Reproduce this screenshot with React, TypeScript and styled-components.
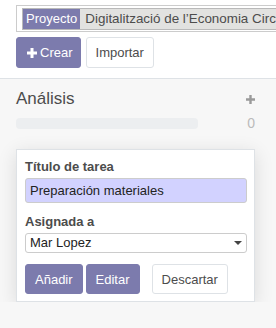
import styled, { createGlobalStyle } from "styled-components";

const Global = createGlobalStyle`
  html, body { margin: 0; padding: 0; overflow: hidden; }
  body {
    font-family: "Liberation Sans", Arial, sans-serif;
    font-size: 13px;
    color: #4c4c4c;
    background: #f7f7f7;
  }
`;

const ControlPanel = styled.div`
  background: #fff;
  border-bottom: 1px solid #dee2e6;
  padding: 5px 0 10px 16px;
  display: flex;
  flex-direction: column;
  gap: 5px;
  overflow: hidden;
`;

const SearchBox = styled.div`
  width: 420px;
  height: 27px;
  box-sizing: border-box;
  border: 1px solid #ccc;
  display: flex;
  align-items: center;
  padding: 0 5px;
`;

const Facet = styled.div`
  display: flex;
  height: 22px;
  box-sizing: border-box;
  border: 1px solid #b9b9b9;
  font-size: 13px;
  line-height: 20px;
  white-space: nowrap;
`;

const FacetLabel = styled.span`
  background: #7c7bad;
  color: #fff;
  padding: 0 3px;
`;

const FacetValue = styled.span`
  background: #e2e2e0;
  color: #4c4c4c;
  padding: 0 5px;
  font-size: 13.4px;
`;

const Buttons = styled.div`
  display: flex;
  gap: 5px;
`;

const Btn = styled.button<{ $primary?: boolean }>`
  font-family: inherit;
  font-size: 13px;
  height: 31px;
  box-sizing: border-box;
  border-radius: 3px;
  padding: 0 9px;
  cursor: pointer;
  display: inline-flex;
  align-items: center;
  gap: 3px;
  border: 1px solid ${p => (p.$primary ? "#7c7bad" : "#dee2e6")};
  background: ${p => (p.$primary ? "#7c7bad" : "#fff")};
  color: ${p => (p.$primary ? "#fff" : "#4c4c4c")};
`;

const CreateBtn = styled(Btn)`
  padding: 0 7px 0 10px;
`;

const Column = styled.div`
  padding: 10px 0 0 16px;
  width: 239px;
`;

const ColumnHeader = styled.div`
  display: flex;
  justify-content: space-between;
  align-items: center;
  height: 20px;
`;

const ColumnTitle = styled.span`
  font-size: 17px;
  line-height: 20px;
  color: #4c4c4c;
`;

const ProgressRow = styled.div`
  display: flex;
  justify-content: space-between;
  align-items: center;
  height: 11px;
  margin-top: 9px;
`;

const ProgressBar = styled.div`
  width: 182px;
  height: 11px;
  border-radius: 4px;
  background: #eceef0;
`;

const Count = styled.span`
  font-size: 14px;
  line-height: 11px;
  color: #bbb;
`;

const QuickCreate = styled.div`
  margin-top: 20px;
  background: #fff;
  border: 1px solid #dee2e6;
  box-shadow: 0 4px 18px rgba(0, 0, 0, 0.12);
  padding: 9px 7px 7px 8px;
  display: flex;
  flex-direction: column;
`;

const Label = styled.label`
  font-weight: bold;
  font-size: 13px;
  line-height: 15px;
  color: #4c4c4c;
  margin-bottom: 4px;
`;

const TextInput = styled.div`
  height: 25px;
  box-sizing: border-box;
  background: #d2d2ff;
  border: 1px solid #ccc;
  border-radius: 3px;
  padding: 0 4px;
  font-size: 13px;
  line-height: 23px;
  color: #222;
  margin-bottom: 11px;
`;

const Select = styled.div`
  height: 20px;
  box-sizing: border-box;
  border: 1px solid #ccc;
  border-radius: 3px;
  padding: 0 4px;
  font-size: 13px;
  line-height: 18px;
  color: #222;
  display: flex;
  justify-content: space-between;
  align-items: center;
`;

const Caret = styled.span`
  width: 0;
  height: 0;
  border-left: 4px solid transparent;
  border-right: 4px solid transparent;
  border-top: 4px solid #444;
`;

const Actions = styled.div`
  display: flex;
  gap: 3px;
  margin-top: 11px;
`;

const FormBtn = styled(Btn)`
  height: 30px;
`;

const Discard = styled(FormBtn)`
  margin-left: 9px;
`;

export default function App() {
  return (
    <>
      <Global />
      <ControlPanel>
        <SearchBox>
          <Facet>
            <FacetLabel>Proyecto</FacetLabel>
            <FacetValue>Digitalització de l’Economia Circular</FacetValue>
          </Facet>
        </SearchBox>
        <Buttons>
          <CreateBtn $primary>
            <svg width="10" height="10" viewBox="0 0 10 10">
              <path d="M3.5 0h3v3.5H10v3H6.5V10h-3V6.5H0v-3h3.5z" fill="#fff" />
            </svg>
            Crear
          </CreateBtn>
          <Btn>Importar</Btn>
        </Buttons>
      </ControlPanel>
      <Column>
        <ColumnHeader>
          <ColumnTitle>Análisis</ColumnTitle>
          <svg width="9" height="9" viewBox="0 0 9 9">
            <path d="M3.3 0h2.4v3.3H9v2.4H5.7V9H3.3V5.7H0V3.3h3.3z" fill="#9a9a9a" />
          </svg>
        </ColumnHeader>
        <ProgressRow>
          <ProgressBar />
          <Count>0</Count>
        </ProgressRow>
        <QuickCreate>
          <Label>Título de tarea</Label>
          <TextInput>Preparación materiales</TextInput>
          <Label>Asignada a</Label>
          <Select>
            Mar Lopez
            <Caret />
          </Select>
          <Actions>
            <FormBtn $primary>Añadir</FormBtn>
            <FormBtn $primary>Editar</FormBtn>
            <Discard>Descartar</Discard>
          </Actions>
        </QuickCreate>
      </Column>
    </>
  );
}
